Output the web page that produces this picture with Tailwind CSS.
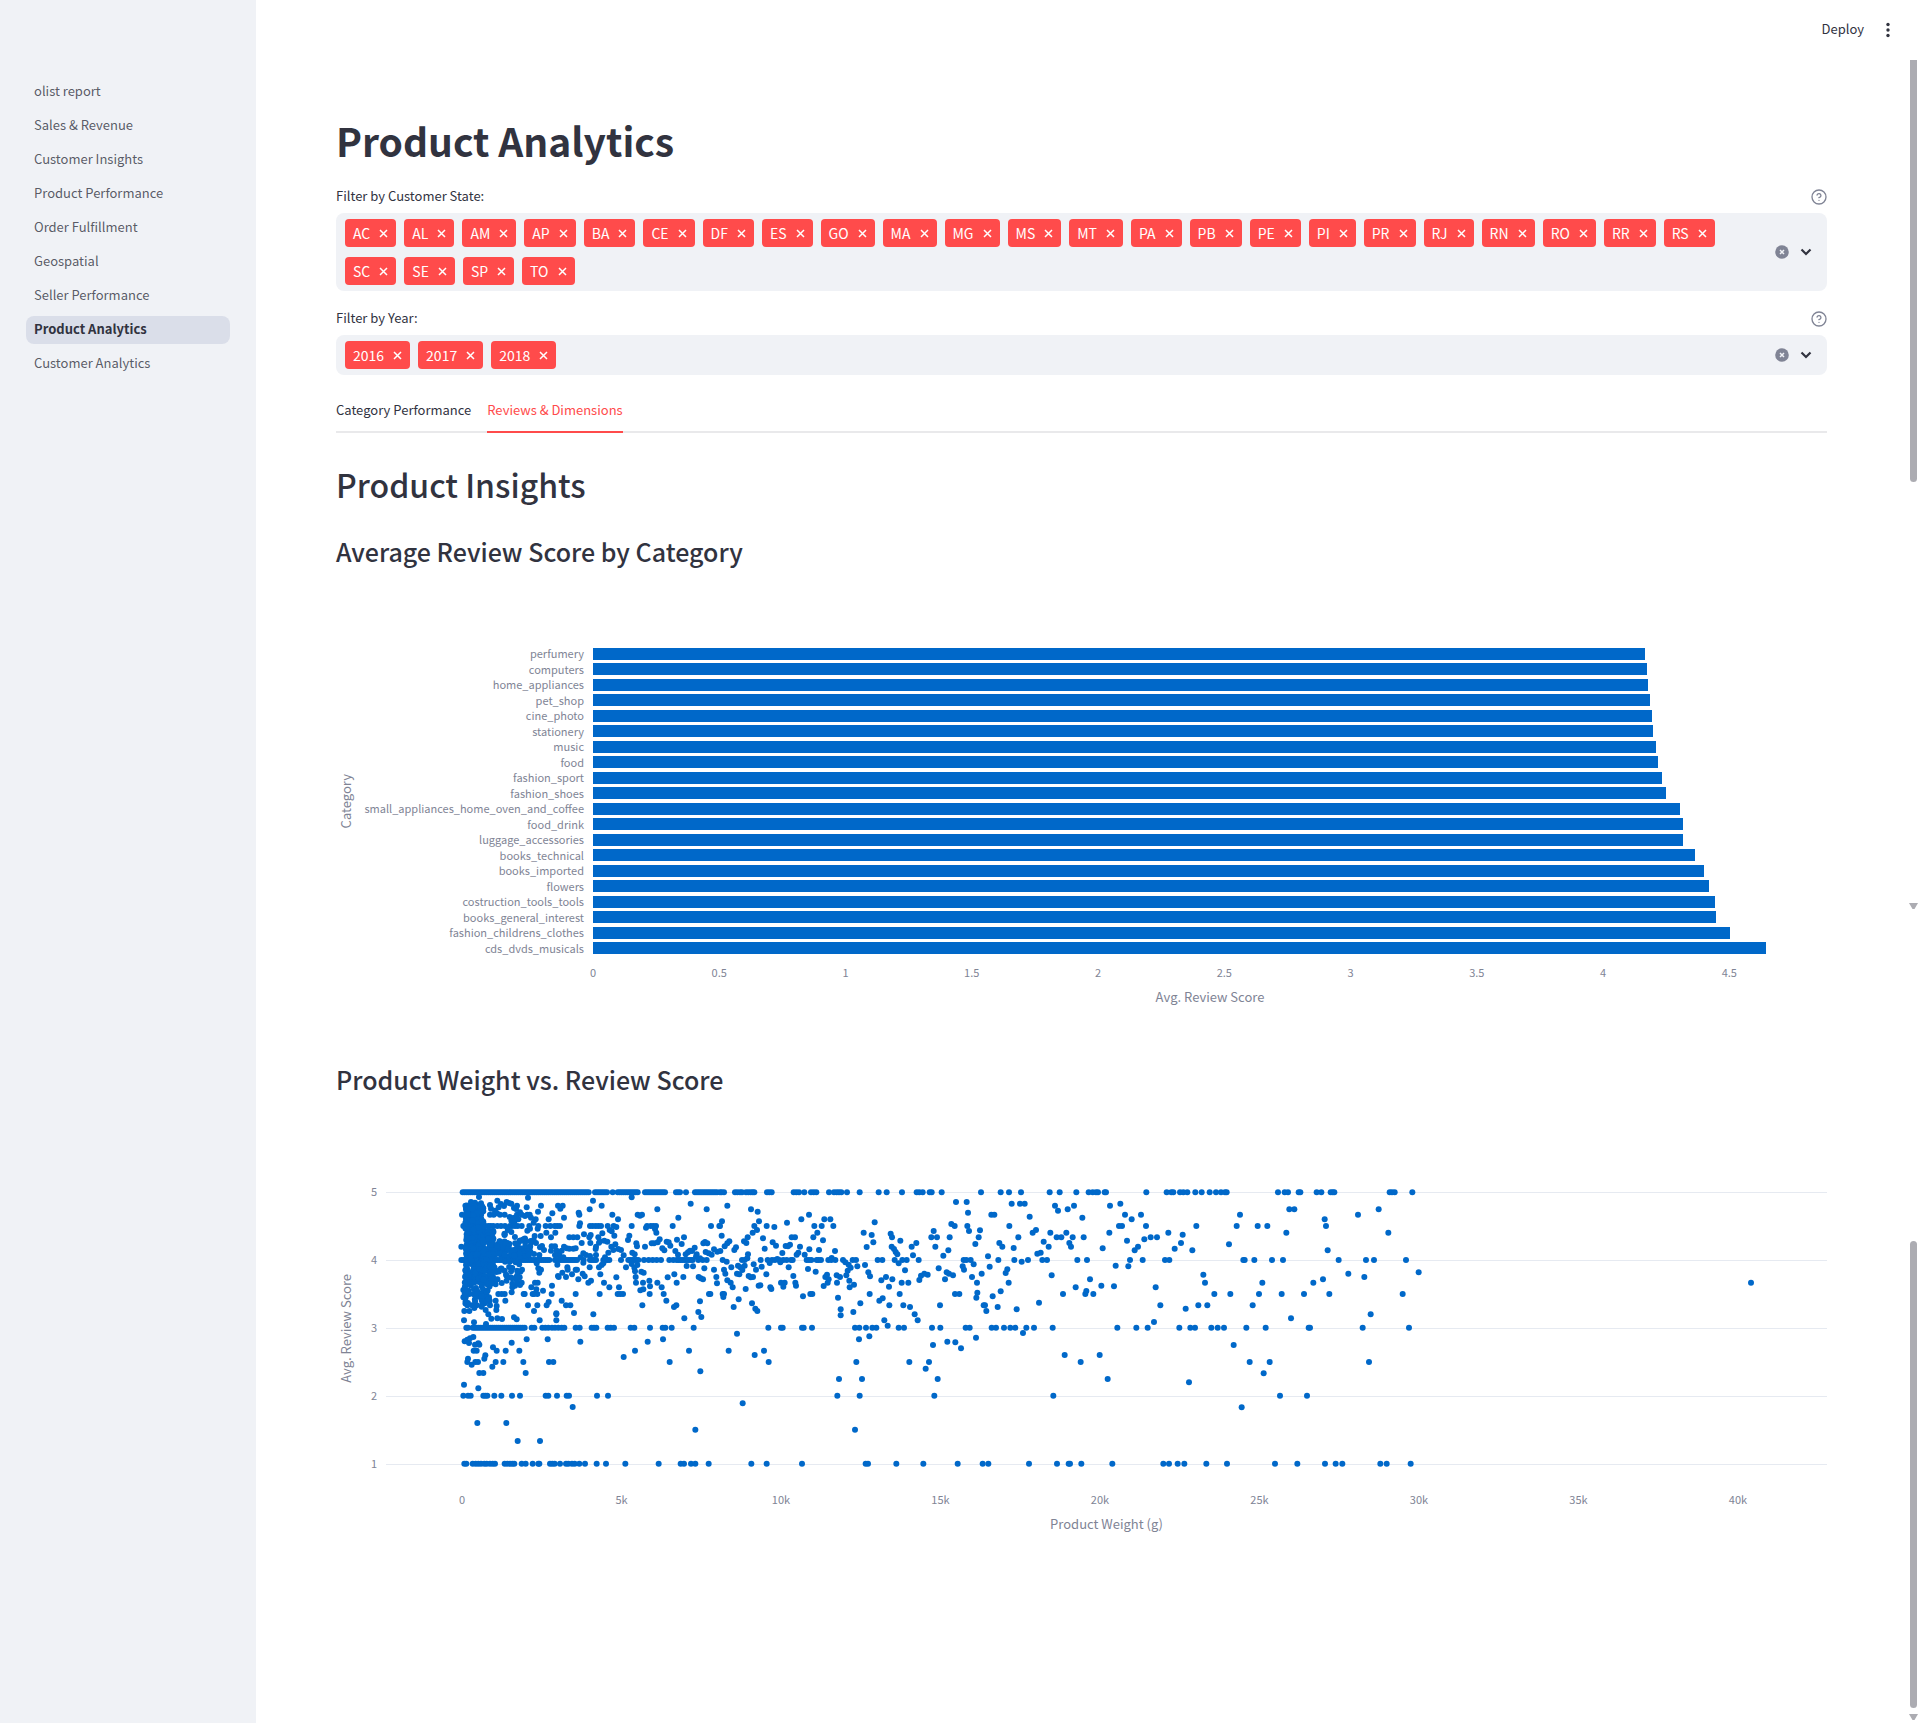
<!DOCTYPE html>
<html lang="en">
<head>
<meta charset="utf-8">
<title>Product Analytics</title>
<script src="https://cdn.jsdelivr.net/npm/@tailwindcss/browser@4"></script>
</head>
<body class="relative flex min-h-screen bg-white font-['Noto_Sans_CJK_SC',sans-serif] text-[#31333f]">

<!-- icon sprite -->
<svg class="hidden" aria-hidden="true">
  <symbol id="help" viewBox="0 0 24 24" fill="none" stroke="currentColor" stroke-width="2" stroke-linecap="round" stroke-linejoin="round"><circle cx="12" cy="12" r="10.500"/><path d="M9.090 9a3 3 0 0 1 5.830 1c0 2-3 3-3 3"/><path d="M12 17h.010"/></symbol>
  <symbol id="clear" viewBox="0 0 16 16"><circle cx="8" cy="8" r="6.800" fill="currentColor"/><path d="M6 6l4 4M10 6l-4 4" stroke="#f0f2f6" stroke-width="1.500"/></symbol>
  <symbol id="chevron" viewBox="0 0 16 16"><path d="M3.500 5.500L8 10l4.500-4.500" fill="none" stroke="currentColor" stroke-width="2.200"/></symbol>
  <symbol id="cross" viewBox="0 0 9 9"><path d="M1 1l7 7M8 1l-7 7" fill="none" stroke="currentColor" stroke-width="1.500"/></symbol>
</svg>

<aside class="w-64 shrink-0 bg-[#f0f2f6] pt-[78px]">
  <nav class="flex flex-col gap-1.5 px-[26px] text-[13px] leading-[26px] text-[#31333f]/80" aria-label="Pages">
    <a href="#" class="rounded-lg px-2 pb-0.5">olist report</a>
    <a href="#" class="rounded-lg px-2 pb-0.5">Sales &amp; Revenue</a>
    <a href="#" class="rounded-lg px-2 pb-0.5">Customer Insights</a>
    <a href="#" class="rounded-lg px-2 pb-0.5">Product Performance</a>
    <a href="#" class="rounded-lg px-2 pb-0.5">Order Fulfillment</a>
    <a href="#" class="rounded-lg px-2 pb-0.5">Geospatial</a>
    <a href="#" class="rounded-lg px-2 pb-0.5">Seller Performance</a>
    <a href="#" aria-current="page" class="rounded-lg bg-[#dadee9] px-2 pb-0.5 font-semibold text-[#31333f]">Product Analytics</a>
    <a href="#" class="rounded-lg px-2 pb-0.5">Customer Analytics</a>
  </nav>
</aside>

<div class="min-w-0 flex-1">
  <header class="absolute top-0 right-0 flex h-15 items-center gap-4 pr-6">
    <button type="button" class="pb-0.5 text-[13px]">Deploy</button>
    <button type="button" aria-label="Menu"><svg class="size-4" viewBox="0 0 16 16" fill="currentColor"><circle cx="8" cy="2.500" r="1.700"/><circle cx="8" cy="8" r="1.700"/><circle cx="8" cy="13.500" r="1.700"/></svg></button>
  </header>

  <main class="pt-28 pr-[93px] pl-20">
    <h1 class="mb-[17px] text-[39px] leading-14 font-bold">Product Analytics</h1>

    <div class="mb-2 flex h-5 items-center justify-between">
      <label for="state" class="pt-0.5 text-[13px] leading-5">Filter by Customer State:</label>
      <svg class="mt-1 size-4 text-[#808495]" role="img" aria-label="Help"><use href="#help"/></svg>
    </div>
    <div class="flex items-center rounded-lg bg-[#f0f2f6] py-1.5 pr-[13px] pl-[9px]">
      <div id="states" class="flex flex-1 flex-wrap gap-x-2 gap-y-2.5 pr-2">
        <input id="state" class="h-7 w-10 bg-transparent outline-none">
      </div>
      <div class="flex gap-2">
        <button type="button" aria-label="Clear states" class="text-[#808495]"><svg class="size-4"><use href="#clear"/></svg></button>
        <button type="button" aria-label="Open states"><svg class="size-4"><use href="#chevron"/></svg></button>
      </div>
    </div>

    <div class="mt-4 mb-2 flex h-5 items-center justify-between">
      <label for="year" class="pt-0.5 text-[13px] leading-5">Filter by Year:</label>
      <svg class="mt-1 size-4 text-[#808495]" role="img" aria-label="Help"><use href="#help"/></svg>
    </div>
    <div class="flex items-center rounded-lg bg-[#f0f2f6] py-1.5 pr-[13px] pl-[9px]">
      <div id="years" class="flex flex-1 flex-wrap gap-x-2 gap-y-2.5 pr-2">
        <input id="year" class="h-7 w-10 bg-transparent outline-none">
      </div>
      <div class="flex gap-2">
        <button type="button" aria-label="Clear years" class="text-[#808495]"><svg class="size-4"><use href="#clear"/></svg></button>
        <button type="button" aria-label="Open years"><svg class="size-4"><use href="#chevron"/></svg></button>
      </div>
    </div>

    <div role="tablist" class="mt-4 flex h-[42px] gap-4 text-[13px] shadow-[inset_0_-2px_0_#e9e9eb]">
      <button type="button" role="tab" aria-selected="false" class="border-b-2 border-transparent pb-0.5">Category Performance</button>
      <button type="button" role="tab" aria-selected="true" class="border-b-2 border-[#ff4b4b] pb-0.5 text-[#ff4b4b]">Reviews &amp; Dimensions</button>
    </div>

    <h2 class="mt-[29px] text-[32px] leading-11 font-medium">Product Insights</h2>

    <section>
      <h3 class="mt-[27px] text-[25px] leading-9 font-medium">Average Review Score by Category</h3>
      <div class="mt-[77px] flex h-[310px] text-[#808495]">
        <div class="flex w-5 items-center justify-center"><span class="rotate-180 text-[13px] leading-5 [writing-mode:vertical-rl]">Category</span></div>
        <div id="categories" class="grid w-[228px] grid-rows-[repeat(20,minmax(0,1fr))] items-center text-right text-[11px] leading-[15px]"></div>
        <div id="bars" class="ml-[9px] grid flex-1 grid-rows-[repeat(20,minmax(0,1fr))] items-center"></div>
      </div>
      <div class="ml-[257px] text-center text-[#808495]">
        <div id="scoreTicks" class="relative mt-[7px] h-[18px] text-[11px] leading-[18px]"></div>
        <p class="mt-1.5 text-[13px] leading-5">Avg. Review Score</p>
      </div>
    </section>

    <section>
      <h3 class="mt-[54px] text-[25px] leading-9 font-medium">Product Weight vs. Review Score</h3>
      <div class="mt-[83px] flex h-[296px] text-[#808495]">
        <div class="flex w-5 items-center justify-center"><span class="rotate-180 text-[13px] leading-5 [writing-mode:vertical-rl]">Avg. Review Score</span></div>
        <div class="flex w-[21px] flex-col gap-[50px] pt-0.5 text-right text-[11px] leading-[18px]"><span>5</span><span>4</span><span>3</span><span>2</span><span>1</span></div>
        <svg id="scatter" class="ml-[9px] h-full min-w-0 flex-1" role="img" aria-label="Product weight against average review score"></svg>
      </div>
      <div class="ml-[50px] pb-12 text-center text-[#808495]">
        <div id="weightTicks" class="relative mt-3.5 h-[18px] text-[11px] leading-[18px]"></div>
        <p class="mt-1.5 text-[13px] leading-5">Product Weight (g)</p>
      </div>
    </section>
  </main>
</div>

<!-- scroll bars -->
<div class="absolute top-15 right-[3px] h-[422px] w-[7px] rounded-b-full bg-[#acacb2]"></div>
<svg class="absolute top-[903px] right-[2px] h-1.5 w-[9px] text-[#acacb2]" viewBox="0 0 9 6"><path d="M0 0h9L5.500 6h-2z" fill="currentColor"/></svg>
<div class="absolute top-[1241px] right-[3px] h-[467px] w-[7px] rounded-full bg-[#acacb2]"></div>
<svg class="absolute top-[1714px] right-[2px] h-1.5 w-[9px] text-[#acacb2]" viewBox="0 0 9 6"><path d="M0 0h9L5.500 6h-2z" fill="currentColor"/></svg>

<script>
const $ = id => document.getElementById(id);

// selected filter values
const tag = t => `<span class="flex h-7 items-center gap-[9px] rounded bg-[#ff4b4b] px-2 text-[14px] leading-7 text-white">${t}<button type="button" aria-label="Remove ${t}"><svg class="size-[9px]"><use href="#cross"/></svg></button></span>`;
$('states').insertAdjacentHTML('afterbegin', 'AC AL AM AP BA CE DF ES GO MA MG MS MT PA PB PE PI PR RJ RN RO RR RS SC SE SP TO'.split(' ').map(tag).join(''));
$('years').insertAdjacentHTML('afterbegin', ['2016', '2017', '2018'].map(tag).join(''));

// bar chart
const scores = [['perfumery',4.1677],['computers',4.1756],['home_appliances',4.1775],['pet_shop',4.1855],['cine_photo',4.195],['stationery',4.197],['music',4.211],['food',4.2185],['fashion_sport',4.2337],['fashion_shoes',4.2488],['small_appliances_home_oven_and_coffee',4.3043],['food_drink',4.3153],['luggage_accessories',4.3162],['books_technical',4.3637],['books_imported',4.4],['flowers',4.4198],['costruction_tools_tools',4.4453],['books_general_interest',4.4462],['fashion_childrens_clothes',4.5016],['cds_dvds_musicals',4.6442]];
const maxScore = 4.887;
$('categories').innerHTML = scores.map(s => `<span>${s[0]}</span>`).join('');
$('bars').innerHTML = scores.map(s => `<div class="h-4/5 bg-[#0068c9]" style="width:${s[1] / maxScore * 100}%"></div>`).join('');
const tick = (label, left) => `<span class="absolute -translate-x-1/2" style="left:${left}%">${label}</span>`;
$('scoreTicks').innerHTML = [0,0.5,1,1.5,2,2.5,3,3.5,4,4.5].map(v => tick(v, v / maxScore * 100)).join('');

// scatter plot: x runs 0..4323 over the plot width; y is 37 at score 5 and 851 at score 1
const W = 4323;
const pts = [];
const row = (dx, y, xs) => xs.forEach(x => pts.push([dx + x, y]));
const run = (y, a, b) => { for (let x = a; x <= b; x += 6) pts.push([162 + x, y]); };
const pairs = (dx, dy, s) => s.trim().split(/\s+/).forEach(p => { const [x, y] = p.split(',').map(Number); pts.push([dx + x, dy + y]); });

// score 5
[[68,449],[465,501],[518,518],[533,598],[615,679],[708,723],[738,738],[765,835]].forEach(r => run(37, ...r));
row(1002, 37, [0,5,12,45,52,60,66,78,85,92,98,103,141,148,155,221,229,237,253,273,281,289,327,342,350,357,364,381,419,476,500,546,590,598,608,629,635,665,783,842,867,903,989,1019,1069,1106,1118,1128,1134]);
row(2142, 37, [14,18,139,200,214,220,240,250,262,286,305,329,348,363,375,380,534,554,564,596,601,650,664,692,698,703,869,876,884,937]);
// score 4
[[64,330],[345,411],[431,431],[450,470],[490,513],[543,543],[565,600],[710,762]].forEach(r => run(240, ...r));
row(162, 240, [612,626,638,650,663,688,700,775,788,800]);
row(1002, 240, [8,66,74,122,143,156,165,178,190,200,213,218,260,267,274,290,296,303,325,334,346,369,398,408,473,487,524,547,560,596,731,739,752,835,883,924,967,981,1072,1101]);
row(2142, 240, [90,128,195,208,430,434,463,516,549,716,798,822,918]);
// score 3
run(443, 98, 257);
row(162, 443, [79,84,275,283,307,316,325,336,345,355,365,373,407,419,455,462,469,503,512,522,572,583,630,668,676,695,761]);
row(1002, 443, [145,183,188,246,251,276,405,418,438,457,469,536,552,636,661,737,749,815,828,852,871,886,919,942,998]);
row(2142, 443, [52,109,143,238,271,285,334,353,372,439,497,626,630,788,927]);
// score 2
row(-168, 647, [400,414,422,460,466,472,493,514,546,570,647,655,681,710,717,801,834]);
row(1002, 647, [352,419,643,1000]);
row(2142, 647, [540,621]);
// score 1
row(-168, 851, [403,409,428,437,445,453,463,470,480,488,495,524,532,540,547,553,575,587,608,625,628,660,667,674,690,708,715,726,734,748,765,800,828,886,986,1052,1062,1083,1096,1136]);
row(1002, 851, [94,140,246,437,444,529,610,713,788,805,927,1011,1046,1050,1084]);
row(2142, 851, [37,190,207,233,253,319,381,525,592,675,707,727,841,860,932]);
// score 4.5
run(138, 70, 138);
row(162, 138, [145,152,160,172,183,195,210,216,225,233,245,268,295,317,331,344,352,360,418,450,458,467,475,483,503,521,575,621,632,640,648,698,813,838]);

// light products
pairs(162, 0, `117,51 264,53 172,62 459,62 575,52 752,71 485,77 303,77 354,77 368,77 361,86 449,88 652,88 800,88 416,98 418,104 337,100 294,95 260,82 231,77 228,87 372,113 326,118 287,118 281,128 273,113 517,104 534,118 593,104 600,107 606,104 715,113 420,130 293,146 284,168 302,168 319,158 346,158 333,172 388,172 400,172 412,172 448,172 432,163 425,189 451,189 452,165 487,160 475,172 480,184 493,182 502,185 467,207 468,200 477,188 509,150 515,154 529,141 523,167 568,167 564,180 526,193 514,200 535,207 543,210 551,226 577,218 584,223 589,190 591,199 615,200 635,190 642,190 653,187 659,178 667,205 673,211 680,185 686,187 691,197 711,179 725,192 732,172 706,213 714,224 645,147 649,158 764,203 756,213 750,212 744,217 737,223 770,223 768,230 780,235 790,190 795,186 802,190 797,216 806,220 815,224 822,208 832,215 618,143
558,262 575,252 583,263 585,274 587,291 588,308 592,255 604,275 611,278 609,308 601,331 610,328 628,302 630,319 629,342 652,308 665,322 671,342 683,292 703,283 710,308 730,291 740,258 759,259 793,265 776,291 782,295 789,298 822,269 829,291 831,310 811,342 807,342 679,362 607,376 702,381 709,376 733,415 780,364 775,396 784,411
477,262 485,255 490,250 481,283 492,308 508,322 537,322 529,292 533,342 541,342 549,342 479,342 407,342 428,281 434,289 415,298 445,308 453,302 449,262 430,248 407,269 411,269 382,262 383,269 378,291 396,283 367,278 354,288 356,291 352,254 365,362 378,376 391,376 402,399 460,403 349,400 349,403 349,421 335,342 336,317 309,332 326,366 320,376 292,376 264,376 282,393 299,421 285,308 293,308 289,328 292,342 278,342 282,342 254,342 251,342 274,322 290,250 295,265 303,269 298,278
288,189 281,180 300,202 312,210 306,198 335,199 345,199 350,212 333,212 358,225 365,212 372,200 380,205 388,206 400,206 407,205 370,232 345,225 298,225 282,222 422,232 430,220 438,225 450,228 468,225 505,218 495,232 520,210
222,412 230,418 172,415 186,417 154,416 145,403 137,390 170,378 169,390 196,362 167,362 150,376 149,362 175,342 185,342 194,342 215,337 217,322 225,317 234,308 245,308 239,292 230,300 229,292 246,269 241,275 72,421 102,427 138,432 73,393 88,393 103,384
93,66 105,68 112,75 123,70 85,77 78,87 66,104 64,200 70,330 70,352 82,376 96,376 110,376 125,380 134,370
150,75 153,86 165,92 176,82 183,72 192,78 200,66 207,69 214,71 222,84 150,104 161,104 171,100 180,104 194,104 209,111 222,113 231,104 240,97 245,104 255,108 262,104 269,104 214,122 223,128 235,118 262,152 270,146`);
pairs(-168, 360, `430,111 404,124 412,119 420,115 417,129 445,130 448,134 435,134 431,152 440,152 489,142 545,128 590,118 653,118 751,125 953,125 999,118 500,152 527,152 568,152 466,166 463,176 414,176 412,186 425,194 436,186 444,186 487,200 497,186 520,186 580,186 657,186 670,186 881,171 915,152 1077,152 1019,186 1111,214 448,219 460,219 587,219 402,254 445,265 728,321 442,369 529,369 563,423 630,423 1096,389`);
// medium-weight products
pairs(1002, 0, `22,77 93,88 113,95 117,124 6,124 0,138 103,138 98,158 111,150 140,138 163,141 201,128 244,118 267,104 283,138 305,138 340,138 313,118 331,118 292,158 280,172 309,181 215,172 225,172 5,167 72,184 79,189 83,172 129,175 158,187 168,197 134,206 14,199 28,184 22,190 48,202 43,210 1,213 84,223 82,235 187,219 197,198 204,199 210,194 240,200 235,218 230,224 254,224 268,208 297,210 345,213 335,234 20,245 34,262 12,269 16,281 54,257 61,262 67,270 74,257 51,281 58,283 101,253 108,269 125,260 149,249 172,237 181,247 206,262 264,267 287,275 139,283 86,288 92,292 99,291 220,288 183,308 194,308 190,320 226,308 228,317 22,301 32,308 38,322 77,327 116,317 121,316 151,322 154,327 8,342 12,342 10,351 56,358 41,381 96,370 106,386 112,393 249,349 271,342 277,342 311,318 316,291 321,284 326,298 323,308 350,286 360,291 351,308 354,353 362,388 362,406 400,396 421,370 388,302 389,322 402,314 379,286 383,272 392,263 386,254 376,247 412,259 435,255 445,277 450,289 449,342 431,158 455,165 460,187 440,201 464,127 512,161 516,172 541,182 515,200 522,207 527,216 532,223 536,250 555,271 575,200 589,189 579,226 517,298 498,291 484,301 507,320 545,308 565,308 539,342 478,362 488,355 508,376 493,421 503,437 550,376 570,381 584,403 593,421 598,300 603,287 613,281 623,284 641,153 634,172 651,172 646,200 689,172 694,132 704,138 708,66 740,66 744,98 742,138 747,153 780,151 776,172 766,192 685,211 670,227 656,265 680,277 687,281 699,286 675,298 705,342 718,342 660,376 728,259 732,269 761,253 756,291 785,281 771,308 772,338 769,353 791,376 795,376 799,393 818,349 842,334 833,381 809,260 804,229 814,104 823,104 868,138 838,189 847,200 881,204 895,172 875,71 900,71 914,71 929,110 948,150 938,158 971,185 986,200 991,158 952,221 962,218 905,245 862,268 857,279 866,308 890,388 957,368 995,286 1005,77 1014,92 1043,88 1062,77 1087,113 1010,172 1024,172 1039,158 1058,172 1048,189 1053,200 1091,172 1067,322 1029,342 1096,342 1099,333 1110,298 1120,342 51,461 26,512 132,512 104,525 146,546 68,670 417,478 448,469 409,546 357,597 426,597 405,749 568,546 627,546 617,566 639,495 682,485 706,487 723,505 768,473 653,597 909,459 1034,525 1082,546 1139,525`);
// heavy products
pairs(2142, 0, `30,77 61,71 75,104 95,118 123,104 57,138 66,138 138,138 28,158 81,182 8,205 104,211 114,200 133,178 152,172 171,172 47,257 85,259 4,317 42,319 167,322 181,376 162,426 205,158 248,164 243,189 224,206 277,211 289,138 310,284 315,308 343,342 391,342 295,376 322,376 257,386 387,193 420,104 410,138 473,138 502,138 559,158 568,88 583,88 487,308 477,342 458,376 545,342 573,415 612,342 640,308 669,298 688,342 674,118 678,138 683,211 774,104 836,88 865,158 745,281 793,291 812,403 908,342 956,277 401,495 449,546 509,546 491,580 807,546 23,597 267,607 425,682 1953,308`);

// the crowd of products under 3 kg
let seed = 7;
const rnd = () => (seed = (seed * 16807) % 2147483647) / 2147483647;
for (let i = 0; i < 400; i++) pts.push([162 + 76 + 54 * rnd(), 76 + 234 * rnd()]);
for (let i = 0; i < 60; i++) pts.push([162 + 74 + 76 * rnd(), 305 + 70 * rnd()]);
for (let i = 0; i < 90; i++) pts.push([162 + 128 + 34 * rnd(), 150 + 165 * rnd()]);
for (let i = 0; i < 95; i++) pts.push([162 + 145 + 130 * Math.pow(rnd(), 1.4), 145 + 85 * Math.sqrt(rnd())]);
for (let i = 0; i < 40; i++) pts.push([162 + 150 + 90 * Math.pow(rnd(), 1.3), 245 + 70 * rnd()]);

const grid = [1, 2, 3, 4, 5].map(s => { const y = Math.round((37 + (5 - s) * 203.5) / 3); return `<line x1="0" x2="100%" y1="${y}" y2="${y}" stroke="#e6eaf1" shape-rendering="crispEdges"/>`; }).join('');
$('scatter').innerHTML = grid + '<g fill="#0068c9">' + pts.map(p => `<circle cx="${(p[0] / W * 100).toFixed(3)}%" cy="${(p[1] / 3).toFixed(1)}" r="3"/>`).join('') + '</g>';
$('weightTicks').innerHTML = [0,5,10,15,20,25,30,35,40].map(k => tick(k ? k + 'k' : '0', (228 + k * 95.7) / W * 100)).join('');
</script>
</body>
</html>
